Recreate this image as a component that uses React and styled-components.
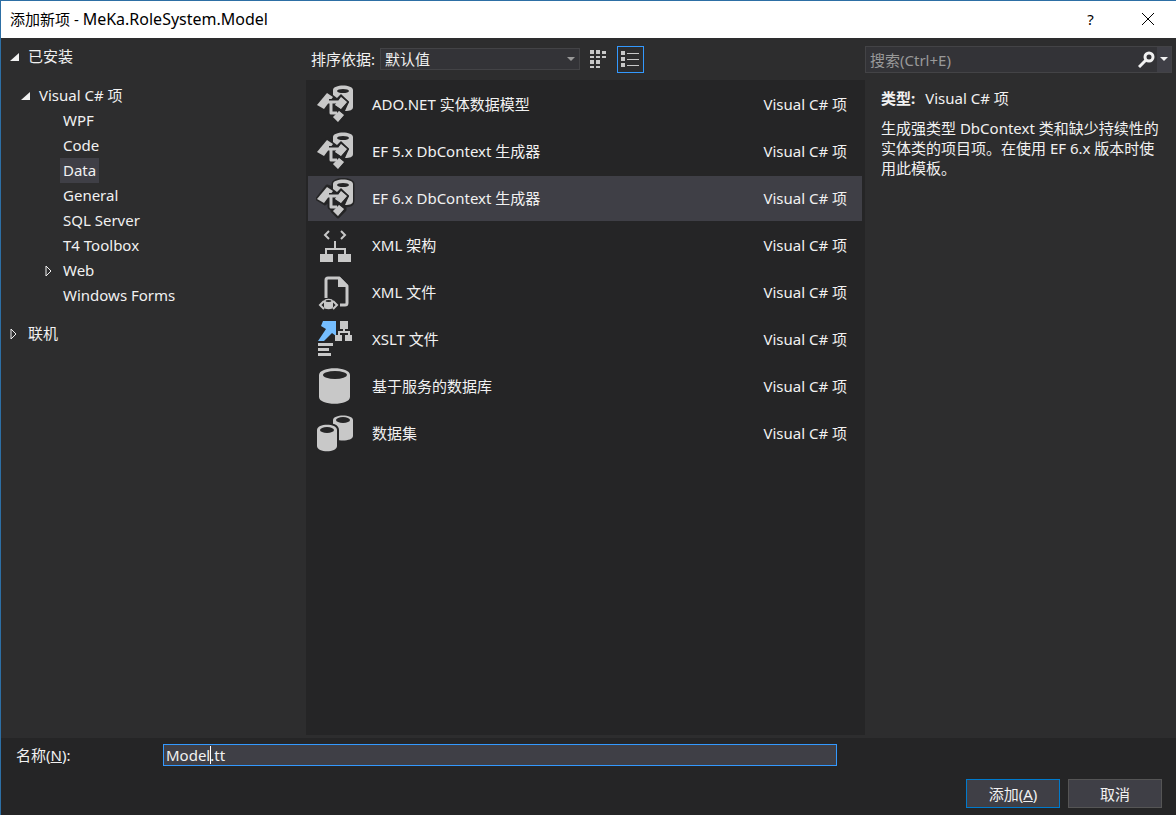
import React, { useState } from 'react'
import styled, { createGlobalStyle, ThemeProvider } from 'styled-components'

const theme = {
  window: '#2d2d2e',
  panel: '#252526',
  selected: '#3f3f46',
  text: '#f1f1f1',
  muted: '#999999',
  border: '#434346',
  accent: '#3399ff',
  icon: '#c8c8c8',
}

const GlobalStyle = createGlobalStyle`
  * { box-sizing: border-box; }
  body { margin: 0; }
  body, button, input, select {
    font-family: "Noto Sans", "Noto Sans CJK SC", sans-serif;
    font-size: 15px;
    line-height: 20px;
  }
  ul, p, dl, dd, h1 { margin: 0; padding: 0; }
  ul { list-style: none; }
`

const Dialog = styled.main`
  display: flex;
  flex-direction: column;
  min-height: 100vh;
  border-top: 1px solid #2d6fa5;
  border-left: 1px solid #2d6fa5;
  color: ${props => props.theme.text};
  background: ${props => props.theme.window};
`

const TitleBar = styled.header`
  display: flex;
  align-items: center;
  height: 37px;
  padding-left: 9px;
  padding-bottom: 2px;
  color: #000;
  background: #fff;
`

const Title = styled.h1`
  flex: 1;
  font-size: 15px;
  font-weight: 400;
`

const ProjectName = styled.span`
  font-size: 16px;
`

const CaptionButton = styled.button`
  display: flex;
  align-items: center;
  justify-content: center;
  width: 57px;
  height: 35px;
  padding: 0;
  border: 0;
  color: #000;
  background: none;
`

const Body = styled.div`
  flex: 1;
  display: grid;
  grid-template-columns: 305px minmax(0, 1fr) 311px;
  padding-bottom: 3px;
`

const Tree = styled.nav`
  padding: 6px 0 0 7px;
`

const Branch = styled.ul`
  padding-left: ${props => props.$indent}px;
  padding-top: ${props => props.$gap || 0}px;
`

const TreeButton = styled.button`
  display: flex;
  align-items: center;
  height: 25px;
  padding: 0;
  border: 0;
  color: inherit;
  background: none;
`

const Online = styled.div`
  padding-top: 13px;
`

const Twisty = styled.svg`
  width: 12px;
  height: 12px;
  margin-right: 5px;
`

const TreeLabel = styled.span`
  height: 25px;
  padding: 2px 3px;
  background: ${props => (props.$selected ? props.theme.selected : 'transparent')};
`

const Center = styled.section`
  display: flex;
  flex-direction: column;
`

const Toolbar = styled.div`
  display: flex;
  align-items: center;
  height: 42px;
  padding-left: 5px;
`

const SelectBox = styled.div`
  position: relative;
  width: 200px;
  margin: 0 5px;
`

const Select = styled.select`
  appearance: none;
  display: block;
  width: 100%;
  height: 22px;
  padding: 0 20px 0 4px;
  border: 1px solid ${props => props.theme.border};
  border-radius: 0;
  color: inherit;
  background: #333337;
  line-height: 20px;
`

const SelectArrow = styled.svg`
  position: absolute;
  top: 9px;
  right: 5px;
  pointer-events: none;
`

const ViewButton = styled.button`
  display: flex;
  align-items: center;
  justify-content: center;
  width: 27px;
  height: 27px;
  margin-right: 5px;
  padding: 0;
  border: 1px solid ${props => (props.$active ? props.theme.accent : 'transparent')};
  background: none;
`

const Templates = styled.ul`
  flex: 1;
  padding: 2px 3px 2px 2px;
  background: ${props => props.theme.panel};
`

const Template = styled.button`
  display: flex;
  align-items: center;
  width: 100%;
  height: 45px;
  margin-bottom: 2px;
  padding: 0 15px 0 8px;
  border: 0;
  color: inherit;
  text-align: left;
  background: ${props => (props.$selected ? props.theme.selected : 'transparent')};
`

const TemplateIcon = styled.svg`
  width: 41px;
  height: 41px;
  margin-right: 15px;
`

const TemplateText = styled.span`
  flex: ${props => (props.$grow ? 1 : 'none')};
  padding-bottom: 2px;
`

const Side = styled.aside`
  padding: 8px 4px 0 0;
`

const Search = styled.div`
  display: flex;
  height: 27px;
  border: 1px solid ${props => props.theme.border};
  background: #333337;
`

const SearchInput = styled.input`
  flex: 1;
  min-width: 0;
  padding: 0 4px;
  border: 0;
  outline: 0;
  color: inherit;
  background: none;
  &::placeholder {
    color: ${props => props.theme.muted};
    opacity: 1;
  }
`

const SearchButton = styled.button`
  display: flex;
  align-items: center;
  justify-content: center;
  width: ${props => props.$width}px;
  padding: 0;
  border: 0;
  background: ${props => (props.$raised ? props.theme.selected : 'none')};
`

const Details = styled.div`
  padding: 15px 5px 0 16px;
`

const Kind = styled.dl`
  display: flex;
  gap: 10px;
  margin-bottom: 10px;
`

const KindLabel = styled.dt`
  font-weight: 700;
`

const Footer = styled.form`
  padding: 6px 14px 7px 15px;
  background: ${props => props.theme.panel};
`

const NameRow = styled.div`
  display: flex;
  align-items: center;
  padding-right: 325px;
`

const NameLabel = styled.label`
  width: 147px;
`

const NameBox = styled.div`
  position: relative;
  flex: 1;
`

const NameInput = styled.input`
  display: block;
  width: 100%;
  height: 22px;
  padding: 0 2px;
  border: 1px solid ${props => props.theme.accent};
  outline: 0;
  color: inherit;
  background: ${props => props.theme.selected};
`

const Caret = styled.i`
  position: absolute;
  top: 2px;
  left: 47px;
  width: 1px;
  height: 18px;
  background: #fff;
`

const Actions = styled.div`
  display: flex;
  justify-content: flex-end;
  gap: 8px;
  padding-top: 13px;
`

const Button = styled.button`
  width: 94px;
  height: 29px;
  padding: 0;
  border: 1px solid ${props => (props.$primary ? '#007acc' : '#555555')};
  color: inherit;
  background: ${props => props.theme.selected};
`

const fill = theme.icon
const dark = theme.panel

const EntityIcon = () => (
  <TemplateIcon viewBox="0 0 41 41" fill={fill} strokeLinejoin="round" aria-hidden="true">
    {/* dark halo, visible on the selected row */}
    <path
      d="M17 6c0-6 20-6 20 0v17c0 3-3 5-8 5v4l-7 7-6-6v-4h-3v-7l-4 4-8-5L11 8l6 2z"
      fill={dark}
      stroke={dark}
      strokeWidth="3"
    />
    <path d="M17 6c0-6 20-6 20 0v17c0 3-3 4-8 4l4-9-8-8-4 4-4-3z" />
    <ellipse cx="27" cy="7" rx="6" ry="2" fill={dark} />
    <path d="M1 21 11 9l6 4-9 12z" />
    <path d="M13 18h10M15 18v11h6" fill="none" stroke={dark} strokeWidth="6" />
    <path d="m18 21 7-9 7 6-7 8zM16 33l7-7 6 5-7 8z" stroke={dark} strokeWidth="2" />
    <path d="m19 21 6-8 6 5-6 7zM17 33l6-6 5 4-6 7z" />
    <path d="M12 18h10M15 18v11h6" fill="none" stroke={fill} strokeWidth="3" />
  </TemplateIcon>
)

const SchemaIcon = () => (
  <TemplateIcon viewBox="0 0 41 41" fill="none" stroke={fill} aria-hidden="true">
    <path d="m13 6-4 4 4 4M25 6l4 4-4 4" strokeWidth="2" />
    <path d="M19 16v8M10 30v-6h19v6" strokeWidth="2" />
    <path d="M4 29h13v8H4zM22 29h13v8H22z" fill={fill} stroke="none" />
  </TemplateIcon>
)

const XmlFileIcon = () => (
  <TemplateIcon viewBox="0 0 41 41" fill="none" stroke={fill} aria-hidden="true">
    <path d="M10 26V8q0-2 2-2h11l8 8v17q0 2-2 2h-5" strokeWidth="3" />
    <path d="M22 5h2l8 8v2H22z" fill={fill} stroke="none" />
    <path d="m8 29-4 4 4 4M17 29l4 4-4 4" strokeWidth="2" />
    <path d="M8 29c0-3 9-3 9 0v6c0 3-9 3-9 0z" fill={fill} stroke="none" />
    <ellipse cx="12.500" cy="29" rx="3" ry="1" fill={dark} stroke="none" />
  </TemplateIcon>
)

const XsltIcon = () => (
  <TemplateIcon viewBox="0 0 41 41" fill={fill} aria-hidden="true">
    <path d="M7 2h13v15l-4-3-8 8H2l8-12-5-3z" fill="#75beff" />
    <path d="M24 2h8v8h-8zM19 16h7v6h-7zM29 16h7v6h-7z" />
    <path d="M28 9v4M23 17v-4h10v4" fill="none" stroke={fill} strokeWidth="2" />
    <path d="M2 24h15v3H2zM2 29h11v3H2zM2 34h13v3H2z" />
  </TemplateIcon>
)

const DatabaseIcon = () => (
  <TemplateIcon viewBox="0 0 41 41" fill={fill} aria-hidden="true">
    <path d="M3 9c0-9 31-9 31 0v22c0 9-31 9-31 0z" />
    <ellipse cx="19" cy="9" rx="12" ry="4" fill={dark} />
  </TemplateIcon>
)

const DatasetIcon = () => (
  <TemplateIcon viewBox="0 0 41 41" fill={fill} aria-hidden="true">
    <path d="M17 7c0-6 20-6 20 0v16c0 6-20 6-20 0z" />
    <ellipse cx="27" cy="7" rx="7" ry="3" fill={dark} />
    <path d="M1 17c0-7 20-7 20 0v16c0 7-20 7-20 0z" stroke={dark} strokeWidth="4" />
    <path d="M1 17c0-7 20-7 20 0v16c0 7-20 7-20 0z" />
    <ellipse cx="11" cy="17" rx="7" ry="3" fill={dark} />
  </TemplateIcon>
)

const Arrow = ({ open }) => (
  <Twisty viewBox="0 0 12 12" aria-hidden="true">
    {open
      ? <path d="M11 2v8H2z" fill={theme.text} />
      : <path d="m3 1 5 5-5 5z" fill="none" stroke={theme.text} />}
  </Twisty>
)

const categories = ['WPF', 'Code', 'Data', 'General', 'SQL Server', 'T4 Toolbox', 'Web', 'Windows Forms']

const templates = [
  { name: 'ADO.NET 实体数据模型', Icon: EntityIcon },
  { name: 'EF 5.x DbContext 生成器', Icon: EntityIcon },
  { name: 'EF 6.x DbContext 生成器', Icon: EntityIcon },
  { name: 'XML 架构', Icon: SchemaIcon },
  { name: 'XML 文件', Icon: XmlFileIcon },
  { name: 'XSLT 文件', Icon: XsltIcon },
  { name: '基于服务的数据库', Icon: DatabaseIcon },
  { name: '数据集', Icon: DatasetIcon },
]

const CategoryLine = styled(TreeButton)`
  padding-left: ${props => (props.$arrow ? 0 : 17)}px;
`

const CategoryTree = () => {
  const [category, setCategory] = useState('Data')
  return (
    <Tree>
      <TreeButton><Arrow open /><TreeLabel>已安装</TreeLabel></TreeButton>
      <Branch $indent={11} $gap={14}>
        <li>
          <TreeButton><Arrow open /><TreeLabel>Visual C# 项</TreeLabel></TreeButton>
          <Branch $indent={24}>
            {categories.map(name => (
              <li key={name}>
                <CategoryLine $arrow={name === 'Web'} onClick={() => setCategory(name)}>
                  {name === 'Web' && <Arrow />}
                  <TreeLabel $selected={name === category}>{name}</TreeLabel>
                </CategoryLine>
              </li>
            ))}
          </Branch>
        </li>
      </Branch>
      <Online>
        <TreeButton><Arrow /><TreeLabel>联机</TreeLabel></TreeButton>
      </Online>
    </Tree>
  )
}

const App = () => {
  const [template, setTemplate] = useState(2)
  const [name, setName] = useState('Model.tt')

  return (
    <ThemeProvider theme={theme}>
      <GlobalStyle />
      <Dialog>
        <TitleBar>
          <Title>添加新项 - <ProjectName>MeKa.RoleSystem.Model</ProjectName></Title>
          <CaptionButton>?</CaptionButton>
          <CaptionButton aria-label="关闭">
            <svg width="14" height="14" viewBox="0 0 14 14" stroke="#000">
              <path d="m1 1 12 12M13 1 1 13" />
            </svg>
          </CaptionButton>
        </TitleBar>

        <Body>
          <CategoryTree />

          <Center>
            <Toolbar>
              <label htmlFor="sort">排序依据:</label>
              <SelectBox>
                <Select id="sort"><option>默认值</option></Select>
                <SelectArrow width="8" height="5" viewBox="0 0 8 5">
                  <path d="M0 0h8L4 4z" fill="#999" />
                </SelectArrow>
              </SelectBox>
              <ViewButton aria-label="小图标">
                <svg width="17" height="19" viewBox="0 0 17 19" fill={fill}>
                  <path d="M0 0h4v4H0zM6 0h4v4H6zM12 1h4v3h-4zM0 6h4v2H0zM6 6h4v2H6zM12 6h4v2h-4zM0 10h4v4H0zM6 10h4v4H6zM0 16h4v2H0zM6 16h4v2H6z" />
                </svg>
              </ViewButton>
              <ViewButton $active aria-label="列表">
                <svg width="19" height="17" viewBox="0 0 19 17" fill={fill}>
                  <path d="M0 0h4v4H0zM0 6h4v4H0zM0 12h4v4H0zM6 2h12v1H6zM6 8h12v1H6zM6 14h12v1H6z" />
                </svg>
              </ViewButton>
            </Toolbar>
            <Templates>
              {templates.map(({ name: label, Icon }, i) => (
                <li key={label}>
                  <Template $selected={i === template} onClick={() => setTemplate(i)}>
                    <Icon />
                    <TemplateText $grow>{label}</TemplateText>
                    <TemplateText>Visual C# 项</TemplateText>
                  </Template>
                </li>
              ))}
            </Templates>
          </Center>

          <Side>
            <Search>
              <SearchInput aria-label="搜索" placeholder="搜索(Ctrl+E)" />
              <SearchButton $width={22} aria-label="开始搜索">
                <svg width="17" height="17" viewBox="0 0 17 17" fill="none" stroke="#f1f1f1">
                  <circle cx="11" cy="6" r="4" strokeWidth="3" />
                  <path d="m8 9-7 7" strokeWidth="3" />
                </svg>
              </SearchButton>
              <SearchButton $width={14} $raised aria-label="搜索选项">
                <svg width="8" height="5" viewBox="0 0 8 5">
                  <path d="M0 0h8L4 4z" fill="#f1f1f1" />
                </svg>
              </SearchButton>
            </Search>
            <Details>
              <Kind>
                <KindLabel>类型:</KindLabel>
                <dd>Visual C# 项</dd>
              </Kind>
              <p>生成强类型 DbContext 类和缺少持续性的实体类的项目项。在使用 EF 6.x 版本时使用此模板。</p>
            </Details>
          </Side>
        </Body>

        <Footer onSubmit={e => e.preventDefault()}>
          <NameRow>
            <NameLabel htmlFor="name">名称(<u>N</u>):</NameLabel>
            <NameBox>
              <NameInput id="name" value={name} onChange={e => setName(e.target.value)} />
              <Caret />
            </NameBox>
          </NameRow>
          <Actions>
            <Button $primary type="submit">添加(<u>A</u>)</Button>
            <Button type="button">取消</Button>
          </Actions>
        </Footer>
      </Dialog>
    </ThemeProvider>
  )
}

export default App
